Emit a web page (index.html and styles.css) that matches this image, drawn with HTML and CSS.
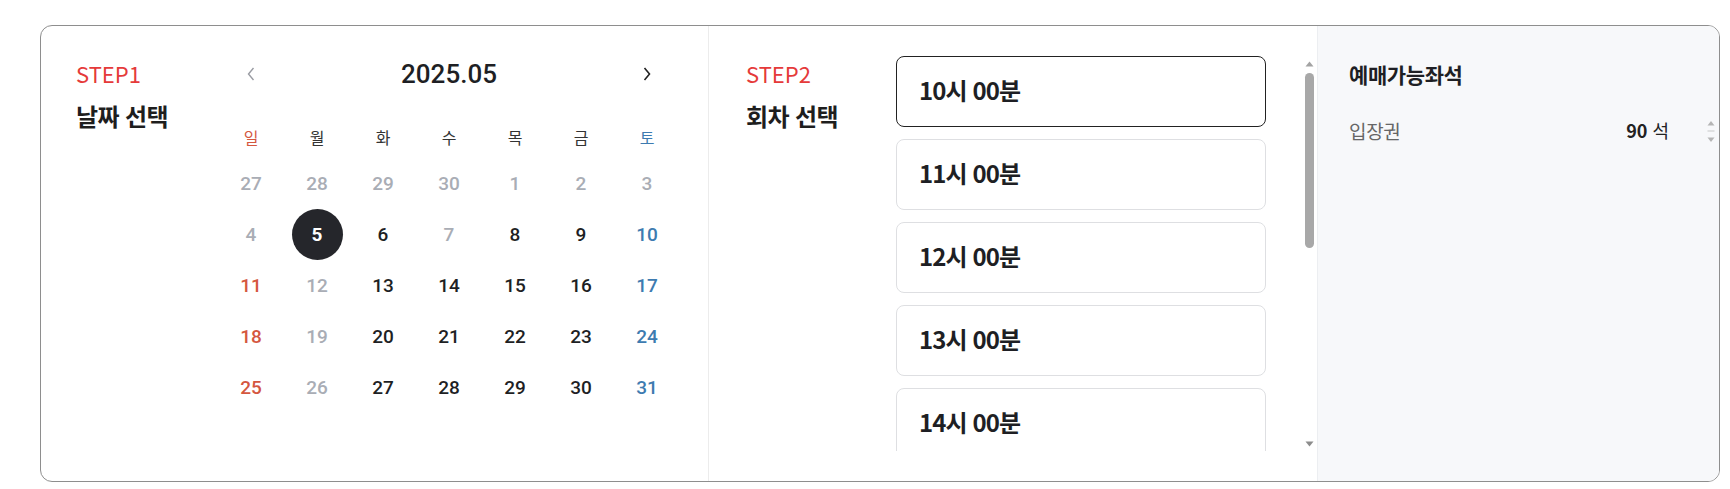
FILE: index.html
```html
<!DOCTYPE html>
<html lang="ko">
<head>
<meta charset="utf-8">
<link rel="stylesheet" href="styles.css">
</head>
<body>
<div class="page">
  <div class="card">
    <section class="sec sec-date">
      <div class="step">
        <div class="step-no">STEP1</div>
        <div class="step-title">날짜 선택</div>
      </div>
      <div class="cal">
        <div class="cal-head">
          <span class="nav prev"><svg width="10" height="16" viewBox="0 0 10 16"><path d="M7.5 2 L2.5 8 L7.5 14" fill="none" stroke="#9a9ca3" stroke-width="1.4"/></svg></span>
          <span class="cal-title">2025.05</span>
          <span class="nav next"><svg width="10" height="16" viewBox="0 0 10 16"><path d="M2.5 2 L7.5 8 L2.5 14" fill="none" stroke="#222" stroke-width="1.6"/></svg></span>
        </div>
        <div class="week">
          <span class="sun">일</span><span>월</span><span>화</span><span>수</span><span>목</span><span>금</span><span class="sat">토</span>
        </div>
        <div class="days">
          <span class="off">27</span><span class="off">28</span><span class="off">29</span><span class="off">30</span><span class="off">1</span><span class="off">2</span><span class="off">3</span>
          <span class="off">4</span><span class="sel"><b>5</b></span><span>6</span><span class="off">7</span><span>8</span><span>9</span><span class="sat">10</span>
          <span class="sun">11</span><span class="off">12</span><span>13</span><span>14</span><span>15</span><span>16</span><span class="sat">17</span>
          <span class="sun">18</span><span class="off">19</span><span>20</span><span>21</span><span>22</span><span>23</span><span class="sat">24</span>
          <span class="sun">25</span><span class="off">26</span><span>27</span><span>28</span><span>29</span><span>30</span><span class="sat">31</span>
        </div>
      </div>
    </section>
    <section class="sec sec-time">
      <div class="step">
        <div class="step-no">STEP2</div>
        <div class="step-title">회차 선택</div>
      </div>
      <div class="slot-wrap">
        <div class="slots">
          <div class="slot active">10시 00분</div>
          <div class="slot">11시 00분</div>
          <div class="slot">12시 00분</div>
          <div class="slot">13시 00분</div>
          <div class="slot">14시 00분</div>
          <div class="slot">15시 00분</div>
          <div class="slot">16시 00분</div>
          <div class="slot">17시 00분</div>
          <div class="slot">18시 00분</div>
          <div class="slot">19시 00분</div>
        </div>
        <div class="fake-sb">
          <span class="sb-btn"><svg width="9" height="6" viewBox="0 0 9 6"><path d="M4.5 0.5 L8.5 5.5 L0.5 5.5 Z" fill="#a3a3a3"/></svg></span>
          <span class="sb-track"><span class="sb-thumb"></span></span>
          <span class="sb-btn"><svg width="9" height="6" viewBox="0 0 9 6"><path d="M0.5 0.5 L8.5 0.5 L4.5 5.5 Z" fill="#8c8c8c"/></svg></span>
        </div>
      </div>
    </section>
    <section class="sec sec-seat">
      <div class="seat-title">예매가능좌석</div>
      <div class="seat-row">
        <span class="seat-name">입장권</span>
        <span class="seat-count"><b>90</b> 석</span>
        <span class="mini-sb"><svg width="8" height="24" viewBox="0 0 8 24"><path d="M4 1 L7.5 5.5 L0.5 5.5 Z" fill="#b5b5b5"/><rect x="0.5" y="10.5" width="7" height="1" fill="#c8c8c8"/><path d="M0.5 17.5 L7.5 17.5 L4 22 Z" fill="#b5b5b5"/></svg></span>
      </div>
    </section>
  </div>
</div>
</body>
</html>
```
FILE: styles.css
```css
* { box-sizing: border-box; }
html, body { margin: 0; padding: 0; background: #fff; }
body { font-family: "Noto Sans CJK KR", "Noto Sans", sans-serif; color: #222; }

.page { padding: 25px 10px 0 40px; }

.card {
  width: 1680px;
  height: 457px;
  border: 1px solid #8e8e8e;
  border-radius: 12px;
  display: flex;
  overflow: hidden;
  background: #fff;
}

.sec { height: 100%; }

.sec-date {
  width: 668px;
  display: flex;
  padding: 33px 0 0 35px;
  border-right: 1px solid #ececec;
}

.step { width: 142px; flex: none; margin-top: -2px; }
.step-no {
  font-size: 22px;
  line-height: 32px;
  color: #e53a3a;
}
.step-title {
  margin-top: 12px;
  font-size: 24px;
  line-height: 30px;
  font-weight: 700;
  letter-spacing: -0.6px;
  color: #1e1e1e;
}

.cal { width: 462px; flex: none; }
.cal-head {
  display: flex;
  align-items: center;
  height: 30px;
}
.nav { width: 66px; display: flex; justify-content: center; align-items: center; }
.cal-title {
  flex: 1;
  text-align: center;
  font-family: Roboto, sans-serif;
  font-size: 26px;
  font-weight: 500;
  color: #1e1f24;
}
.week {
  margin-top: 28px;
  display: grid;
  grid-template-columns: repeat(7, 66px);
  height: 40px;
  align-items: center;
  font-size: 16px;
  color: #333;
}
.week span, .days span { text-align: center; }
.days {
  margin-top: 1px;
  display: grid;
  grid-template-columns: repeat(7, 66px);
  grid-auto-rows: 51px;
  align-items: center;
  font-family: Roboto, sans-serif;
  font-size: 19px;
  font-weight: 500;
  color: #1e1f24;
}
.days span { display: flex; justify-content: center; align-items: center; height: 51px; }
.sun { color: #d4573f; }
.sat { color: #3d7bb0; }
.off { color: #a9adb5; }
.days .sel b {
  width: 51px; height: 51px;
  border-radius: 50%;
  background: #25262b;
  color: #fff;
  display: flex; justify-content: center; align-items: center;
  font-weight: 700;
}

.sec-time {
  width: 608px;
  display: flex;
  padding: 33px 0 0 37px;
}
.sec-time .step { width: 150px; }
.slot-wrap {
  margin-top: -3px;
  display: flex;
  gap: 36px;
  height: 395px;
}
.slots {
  width: 370px;
  height: 395px;
  overflow: hidden;
  display: flex;
  flex-direction: column;
  gap: 12px;
}
.slot {
  flex: none;
  height: 71px;
  border: 1px solid #dedfe2;
  border-radius: 8px;
  display: flex;
  align-items: center;
  padding: 0 0 4px 22px;
  font-size: 24px;
  font-weight: 700;
  letter-spacing: -0.9px;
  color: #1e1f24;
}
.slot.active { border-color: #222; }

.fake-sb {
  width: 15px;
  height: 395px;
  display: flex;
  flex-direction: column;
}
.sb-btn { height: 15px; flex: none; display: flex; align-items: center; justify-content: center; }
.sb-track { flex: 1; display: flex; flex-direction: column; align-items: center; }
.sb-thumb {
  margin-top: 2px;
  width: 9px;
  height: 175px;
  border-radius: 5px;
  background: #a8a8a8;
}

.sec-seat {
  flex: 1;
  background: #f7f8fa;
  border-left: 1px solid #eceef1;
  padding: 33px 4px 0 31px;
}
.seat-title {
  font-size: 21px;
  line-height: 30px;
  font-weight: 700;
  letter-spacing: -0.4px;
  color: #1e1f24;
}
.seat-row {
  margin-top: 28px;
  display: flex;
  align-items: center;
  height: 26px;
}
.seat-name { flex: 1; font-size: 19px; color: #666; letter-spacing: -0.3px; }
.seat-count { font-size: 18px; color: #222; }
.seat-count b { font-weight: 700; }
.mini-sb { margin-left: 38px; display: flex; padding-top: 3px; }
```
